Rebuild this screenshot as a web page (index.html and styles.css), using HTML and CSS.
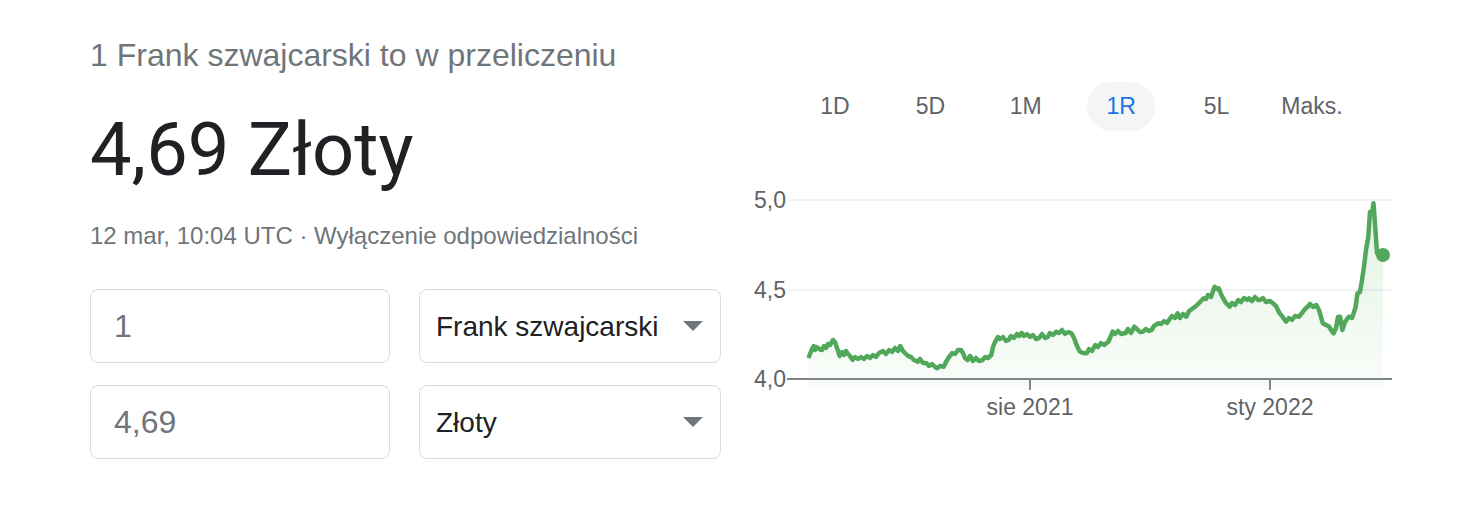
FILE: index.html
```html
<!DOCTYPE html>
<html lang="pl">
  <head>
    <meta charset="utf-8">
    <title>Przelicznik walut</title>
    <link rel="stylesheet" href="styles.css">
  </head>
  <body>

  <div class="converter">
    <div class="summary">
      <div class="question">1 Frank szwajcarski to w przeliczeniu</div>
      <div class="result">4,69 Złoty</div>
      <div class="meta">12 mar, 10:04 UTC · Wyłączenie odpowiedzialności</div>

      <div class="fields">
        <input class="amount" type="text" value="1">
        <div class="currency">
          <select>
            <option>Frank szwajcarski</option>
          </select>
        </div>
        <input class="amount" type="text" value="4,69">
        <div class="currency">
          <select>
            <option>Złoty</option>
          </select>
        </div>
      </div>
    </div>

    <div class="chart">
      <div class="ranges">
        <span class="range">1D</span>
        <span class="range">5D</span>
        <span class="range">1M</span>
        <span class="range active">1R</span>
        <span class="range">5L</span>
        <span class="range">Maks.</span>
      </div>

      <svg class="plot" width="680" height="260" viewBox="740 170 680 260">
        <defs>
          <linearGradient id="fill" x1="0" y1="0" x2="0" y2="1">
            <stop offset="0" stop-color="#4caf50" stop-opacity="0.16"/>
            <stop offset="1" stop-color="#4caf50" stop-opacity="0.03"/>
          </linearGradient>
        </defs>

        <!-- grid -->
        <line class="grid" x1="788" y1="200" x2="1392" y2="200"/>
        <line class="grid" x1="788" y1="290" x2="1392" y2="290"/>

        <text class="label" x="786" y="208" text-anchor="end">5,0</text>
        <text class="label" x="786" y="298" text-anchor="end">4,5</text>
        <text class="label" x="786" y="387" text-anchor="end">4,0</text>

        <!-- area + line -->
        <path class="area" d="M808.5,358 L810,354 L812,349 L813.7,346 L815,350 L817,347 L819,349 L822,350 L824,346 L826,348 L828,344 L830,345 L833,340 L835,342 L837,348 L839.7,356 L842,352 L844,355 L846,351 L848,354 L850,356 L852.7,360 L855,357 L858,359 L861,357 L864,359 L867,356 L870,358 L873,355 L876,357 L879,353 L883,351 L886,354 L889,350 L892,352 L895,348 L898,351 L900.3,346 L903,351 L905,353 L908,356 L911,357 L914,360 L917.7,361.7 L920,359 L923,363 L926.3,363 L929,366 L932,364 L935,367 L937.2,368.3 L940,366 L943.7,366.7 L946,362 L949,357 L952.3,353 L955,354 L958,350 L961,350 L963,353 L965,358 L967.5,360 L970,356 L973,361 L976,358 L979,361 L982.7,360 L985,357 L988,358 L991.3,355 L993,347 L995,342 L997.8,337 L1000,339 L1003,337 L1006,341 L1008.6,340 L1011,336 L1014,338 L1017,334 L1019,336 L1021.6,333 L1024,336 L1027,334 L1030,337 L1033,335 L1036,339 L1039,338 L1042,334 L1045,338 L1047.6,337 L1050,333 L1053,335 L1056.3,331.7 L1059,333 L1062,330 L1065,334 L1068,332 L1071.5,333.3 L1074,338 L1077,346 L1080,351.7 L1083,353 L1086.6,353.3 L1089,349 L1092,351 L1095.3,345 L1098,347 L1101,343 L1104,345 L1108.3,341.7 L1110,338 L1112.6,331.7 L1115,334 L1118,331 L1121,334 L1125.6,333 L1128,329 L1131,333 L1134.3,326.7 L1137,329 L1140,332 L1143,331.7 L1146,329 L1149,331 L1151.6,330 L1154,326 L1158.1,323.3 L1161,324 L1164,321 L1167,323 L1169,320 L1172,316 L1175,318 L1177.6,313.3 L1180,318 L1183,314 L1186.3,316.7 L1189,311 L1192.8,308.3 L1196,306 L1199,303 L1203.6,298.3 L1206,299 L1208,295 L1211,297 L1214.5,286.7 L1217,289 L1218.8,288.3 L1221,294 L1223.1,298.3 L1226,303 L1229.6,306.7 L1232,303 L1235,305 L1238.3,300 L1241,302 L1244,298 L1247,300 L1249.1,298.3 L1252,301 L1255,297 L1258,300 L1260,300 L1263,298 L1266,302 L1270,301 L1273,303.3 L1276,306 L1279.5,313.3 L1282,316 L1286,321.7 L1289,318 L1292,320 L1295,316 L1299,316.7 L1302,313 L1305,309 L1307.6,306.7 L1310,304 L1313,307 L1316.3,305 L1319,310 L1322.8,323.3 L1326,325 L1329.3,326.7 L1331,330 L1333.6,333.3 L1336,328 L1338,317 L1340.1,316.7 L1342.3,330 L1345,322 L1348.8,316.7 L1352,318 L1355.3,308.3 L1357.5,293.3 L1360,292 L1362,280 L1364,266.7 L1366,250 L1368.3,236.7 L1370,212 L1372,214 L1373.5,203.3 L1375,224 L1377,253.3 L1383,255 L1383,390 L808.5,390 Z"/>
        <path class="line" d="M808.5,358 L810,354 L812,349 L813.7,346 L815,350 L817,347 L819,349 L822,350 L824,346 L826,348 L828,344 L830,345 L833,340 L835,342 L837,348 L839.7,356 L842,352 L844,355 L846,351 L848,354 L850,356 L852.7,360 L855,357 L858,359 L861,357 L864,359 L867,356 L870,358 L873,355 L876,357 L879,353 L883,351 L886,354 L889,350 L892,352 L895,348 L898,351 L900.3,346 L903,351 L905,353 L908,356 L911,357 L914,360 L917.7,361.7 L920,359 L923,363 L926.3,363 L929,366 L932,364 L935,367 L937.2,368.3 L940,366 L943.7,366.7 L946,362 L949,357 L952.3,353 L955,354 L958,350 L961,350 L963,353 L965,358 L967.5,360 L970,356 L973,361 L976,358 L979,361 L982.7,360 L985,357 L988,358 L991.3,355 L993,347 L995,342 L997.8,337 L1000,339 L1003,337 L1006,341 L1008.6,340 L1011,336 L1014,338 L1017,334 L1019,336 L1021.6,333 L1024,336 L1027,334 L1030,337 L1033,335 L1036,339 L1039,338 L1042,334 L1045,338 L1047.6,337 L1050,333 L1053,335 L1056.3,331.7 L1059,333 L1062,330 L1065,334 L1068,332 L1071.5,333.3 L1074,338 L1077,346 L1080,351.7 L1083,353 L1086.6,353.3 L1089,349 L1092,351 L1095.3,345 L1098,347 L1101,343 L1104,345 L1108.3,341.7 L1110,338 L1112.6,331.7 L1115,334 L1118,331 L1121,334 L1125.6,333 L1128,329 L1131,333 L1134.3,326.7 L1137,329 L1140,332 L1143,331.7 L1146,329 L1149,331 L1151.6,330 L1154,326 L1158.1,323.3 L1161,324 L1164,321 L1167,323 L1169,320 L1172,316 L1175,318 L1177.6,313.3 L1180,318 L1183,314 L1186.3,316.7 L1189,311 L1192.8,308.3 L1196,306 L1199,303 L1203.6,298.3 L1206,299 L1208,295 L1211,297 L1214.5,286.7 L1217,289 L1218.8,288.3 L1221,294 L1223.1,298.3 L1226,303 L1229.6,306.7 L1232,303 L1235,305 L1238.3,300 L1241,302 L1244,298 L1247,300 L1249.1,298.3 L1252,301 L1255,297 L1258,300 L1260,300 L1263,298 L1266,302 L1270,301 L1273,303.3 L1276,306 L1279.5,313.3 L1282,316 L1286,321.7 L1289,318 L1292,320 L1295,316 L1299,316.7 L1302,313 L1305,309 L1307.6,306.7 L1310,304 L1313,307 L1316.3,305 L1319,310 L1322.8,323.3 L1326,325 L1329.3,326.7 L1331,330 L1333.6,333.3 L1336,328 L1338,317 L1340.1,316.7 L1342.3,330 L1345,322 L1348.8,316.7 L1352,318 L1355.3,308.3 L1357.5,293.3 L1360,292 L1362,280 L1364,266.7 L1366,250 L1368.3,236.7 L1370,212 L1372,214 L1373.5,203.3 L1375,224 L1377,253.3 L1383,255"/>
        <circle class="dot" cx="1383" cy="255" r="7"/>

        <!-- x axis -->
        <line class="axis" x1="787" y1="379" x2="1392" y2="379"/>
        <line class="axis" x1="1030" y1="379" x2="1030" y2="390"/>
        <line class="axis" x1="1270" y1="379" x2="1270" y2="390"/>
        <text class="label" x="1030" y="415" text-anchor="middle">sie 2021</text>
        <text class="label" x="1270" y="415" text-anchor="middle">sty 2022</text>
      </svg>
    </div>
  </div>

  </body>
</html>
```

FILE: styles.css
```css
body {
  margin: 0;
  background-color: #fff;
  font-family: "Liberation Sans", Arial, sans-serif;
}

.converter {
  display: flex;
  gap: 19px;
  padding-left: 90px;
}

.summary {
  width: 631px;
}

.question {
  margin-top: 37px;
  font-size: 32px;
  line-height: 37px;
  color: #70757a;
}

.result {
  margin-top: 33px;
  font-family: Roboto, "Open Sans", sans-serif;
  font-size: 74px;
  line-height: 86px;
  color: #202124;
}

.meta {
  margin-top: 29px;
  font-size: 24px;
  line-height: 28px;
  color: #70757a;
}

.fields {
  display: grid;
  grid-template-columns: 300px 302px;
  grid-auto-rows: 74px;
  column-gap: 29px;
  row-gap: 22px;
  margin-top: 39px;
}

.amount,
.currency select {
  box-sizing: border-box;
  width: 100%;
  height: 100%;
  margin: 0;
  border: 1px solid #dadce0;
  border-radius: 8px;
  background-color: #fff;
  font-family: "Liberation Sans", Arial, sans-serif;
  outline: none;
}

.amount {
  padding: 0 23px;
  font-size: 32px;
  color: #70757a;
}

.currency {
  position: relative;
}

.currency select {
  appearance: none;
  -webkit-appearance: none;
  padding: 0 16px;
  font-size: 28px;
  color: #202124;
}

.currency::after {
  content: "";
  position: absolute;
  right: 18px;
  top: 32px;
  border-left: 10px solid transparent;
  border-right: 10px solid transparent;
  border-top: 10px solid #70757a;
  pointer-events: none;
}

.chart {
  width: 680px;
}

.ranges {
  display: flex;
  gap: 27.4px;
  margin-top: 82px;
  padding-left: 61px;
}

.range {
  width: 68px;
  height: 49px;
  border-radius: 25px;
  display: flex;
  align-items: center;
  justify-content: center;
  font-size: 23px;
  color: #5f6368;
}

.range.active {
  background-color: #f4f6f6;
  color: #1a73e8;
}

.plot {
  display: block;
  margin-top: 39px;
}

.grid {
  stroke: #f1f3f4;
  stroke-width: 2;
}

.axis {
  stroke: #80868b;
  stroke-width: 2;
}

.label {
  font-family: "Liberation Sans", Arial, sans-serif;
  font-size: 23px;
  fill: #5f6368;
}

.area {
  fill: url(#fill);
}

.line {
  fill: none;
  stroke: #52a85a;
  stroke-width: 4.5;
  stroke-linejoin: round;
}

.dot {
  fill: #52a85a;
}
```
